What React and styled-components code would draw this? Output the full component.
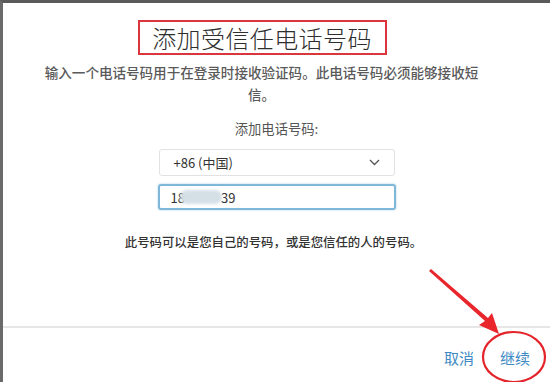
import React from "react";
import styled, { createGlobalStyle } from "styled-components";

const Global = createGlobalStyle`
  html, body { margin: 0; padding: 0; background: #fff; }
  body { font-family: "Noto Sans CJK SC", "Noto Sans", sans-serif; overflow: hidden; }
`;

const Window = styled.div`
  position: relative;
  width: 550px;
  height: 382px;
  box-sizing: border-box;
  border-top: 3px solid #5a5a5a;
  border-left: 3px solid #6a6a6a;
  background: #fff;
  display: flex;
  flex-direction: column;
`;

const Body = styled.div`
  flex: 1;
  display: flex;
  flex-direction: column;
  align-items: center;
  padding-top: 17px;
`;

const TitleBox = styled.div`
  border: 2px solid #d9363e;
  width: 245px;
  height: 31px;
  display: flex;
  align-items: center;
  justify-content: center;
  margin-right: 29px;
`;

const Title = styled.h1`
  margin: 0;
  font-size: 24px;
  font-weight: 300;
  color: #2e2e2e;
  letter-spacing: 0.4px;
  line-height: 1;
`;

const Lead = styled.p`
  margin: 6px 30px 0 0;
  width: 440px;
  text-align: center;
  font-size: 13.55px;
  line-height: 22px;
  font-weight: 500;
  color: #5a5a5a;
`;

const Label = styled.div`
  margin-top: 15px;
  font-size: 13.3px;
  color: #555;
  line-height: 18px;
`;

const Field = styled.div`
  box-sizing: border-box;
  width: ${p => p.$w}px;
  height: ${p => p.$h}px;
  border: ${p => (p.$focus ? "2px solid #7fb7d8" : "1px solid #e2e2e2")};
  border-radius: 3px;
  box-shadow: ${p => (p.$focus ? "0 0 2px rgba(90,160,210,0.6)" : "none")};
  display: flex;
  align-items: center;
  justify-content: space-between;
  padding: 0 ${p => (p.$focus ? 11 : 14)}px;
  font-size: 13px;
  color: #333;
  margin-top: ${p => p.$mt}px;
  position: relative;
`;

const Digits = styled.span`
  position: relative;
  display: inline-flex;
  align-items: center;
`;

const Blur = styled.span`
  display: inline-block;
  width: 42px;
  height: 14px;
  background: #d5dfe6;
  border-radius: 7px;
  filter: blur(1.5px);
  margin: 0 -1px 0 -5px;
`;

const Note = styled.p`
  margin: 23px 0 0 -6px;
  font-size: 12.4px;
  font-weight: 500;
  color: #333;
  line-height: 18px;
`;

const Footer = styled.div`
  height: 50px;
  border-top: 2px solid #e6e6e6;
  display: flex;
  align-items: center;
  justify-content: flex-end;
  gap: 26px;
  padding-right: 20px;
  padding-top: 4px;
`;

const FootBtn = styled.button`
  background: none;
  border: none;
  padding: 0;
  font-family: inherit;
  font-size: 15px;
  color: #3f8ac4;
  cursor: pointer;
`;

const Overlay = styled.svg`
  position: absolute;
  left: -3px;
  top: -3px;
  pointer-events: none;
`;

export default function App() {
  return (
    <>
      <Global />
      <Window>
        <Body>
          <TitleBox>
            <Title>添加受信任电话号码</Title>
          </TitleBox>
          <Lead>输入一个电话号码用于在登录时接收验证码。此电话号码必须能够接收短信。</Lead>
          <Label>添加电话号码:</Label>
          <Field $w={236} $h={27} $mt={11}>
            <span>+86 (中国)</span>
            <svg width="11" height="7" viewBox="0 0 11 7">
              <path d="M1 1 L5.5 5.5 L10 1" fill="none" stroke="#555" strokeWidth="1.3" />
            </svg>
          </Field>
          <Field $w={238} $h={26} $mt={8} $focus>
            <Digits>
              18<Blur />39
            </Digits>
          </Field>
          <Note>此号码可以是您自己的号码，或是您信任的人的号码。</Note>
        </Body>
        <Footer>
          <FootBtn>取消</FootBtn>
          <FootBtn>继续</FootBtn>
        </Footer>
        <Overlay width="550" height="382" viewBox="0 0 550 382">
          <polygon points="429,271 431,269 488,318 492,313 499,334 479,325 485,321" fill="#e8262b" />
          <ellipse cx="514" cy="357" rx="31" ry="25" fill="none" stroke="#e3242b" strokeWidth="2.2" />
        </Overlay>
      </Window>
    </>
  );
}
